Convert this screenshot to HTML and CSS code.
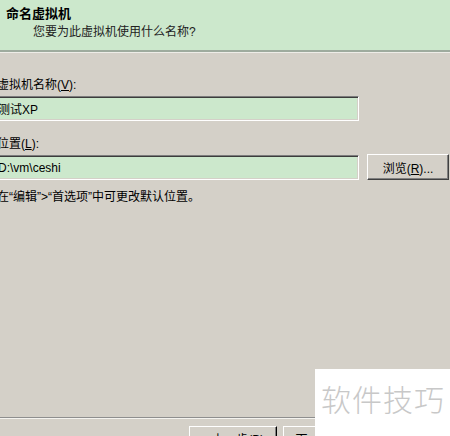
FILE: index.html
```html
<!DOCTYPE html>
<html lang="zh-CN">

<head>
    <meta charset="UTF-8" />
    <meta name="viewport" content="width=device-width, initial-scale=1" />
    <title>新建虚拟机向导</title>
    <link rel="stylesheet" href="styles.css">
</head>

<body>
    <div class="wizard">
        <div class="wizard-header">
            <div class="wizard-title">命名虚拟机</div>
            <div class="wizard-subtitle">您要为此虚拟机使用什么名称?</div>
        </div>

        <div class="wizard-body">
            <div class="field">
                <label for="vmName">虚拟机名称(<u>V</u>):</label>
                <div class="field-row">
                    <input type="text" id="vmName" class="text-input" value="测试XP" />
                </div>
            </div>

            <div class="field">
                <label for="vmPath">位置(<u>L</u>):</label>
                <div class="field-row">
                    <input type="text" id="vmPath" class="text-input" value="D:\vm\ceshi" />
                    <button type="button" class="btn btn-browse">浏览(<u>R</u>)...</button>
                </div>
            </div>

            <p class="hint">在“编辑”&gt;“首选项”中可更改默认位置。</p>
        </div>

        <div class="wizard-footer">
            <button type="button" class="btn btn-nav btn-back">&lt; 上一步(<u>B</u>)</button>
            <button type="button" class="btn btn-nav">下一步(<u>N</u>) &gt;</button>
        </div>
    </div>

    <!-- site watermark in the lower right corner -->
    <div class="watermark">软件技巧</div>
</body>

</html>
```

FILE: styles.css
```css
html,
body {
    height: 100%;
}

body {
    margin: 0;
    overflow: hidden;
    background-color: #d4d0c8;
    font-family: "Liberation Sans", "Noto Sans CJK SC", sans-serif;
    font-size: 12px;
    color: #000;
}

.wizard {
    display: flex;
    flex-direction: column;
    height: 100%;
}

.wizard-header {
    height: 52px;
    padding: 6px 0 0 6px;
    box-sizing: border-box;
    background-color: #cce8cc;
    border-bottom: 2px solid #9eab9e;
    box-shadow: 0 1px 0 #eeede8;
}

.wizard-title {
    font-size: 13px;
    font-weight: bold;
    line-height: 16px;
}

.wizard-subtitle {
    margin-top: 3px;
    padding-left: 27px;
    line-height: 14px;
    color: #222;
}

.wizard-body {
    flex: 1;
    padding-top: 26px;
    margin-left: -6px;
}

.field {
    margin-bottom: 16px;
}

.field label {
    display: block;
    margin: 0 0 4px 3px;
    line-height: 14px;
}

.field-row {
    display: flex;
    align-items: flex-start;
    gap: 8px;
}

.text-input {
    width: 365px;
    height: 25px;
    padding: 0 3px;
    box-sizing: border-box;
    font: inherit;
    color: #000;
    background-color: #cce8cc;
    border: 1px solid;
    border-color: #7c7c7c #ffffff #ffffff #7c7c7c;
    box-shadow: inset 1px 1px 0 #3c3c3c, inset -1px -1px 0 #d4d0c8;
    outline: none;
}

.btn {
    height: 26px;
    padding: 0;
    font: inherit;
    color: #000;
    background-color: #d4d0c8;
    border: 1px solid;
    border-color: #ffffff #404040 #404040 #ffffff;
    box-shadow: inset -1px -1px 0 #808080;
    cursor: pointer;
}

.btn-browse {
    width: 82px;
    margin-top: -1px;
}

.hint {
    margin: -6px 0 0 3px;
    line-height: 14px;
}

.wizard-footer {
    height: 10px;
    display: flex;
    gap: 6px;
    padding: 8px 0 0 189px;
    border-top: 1px solid #8e8e8e;
    box-shadow: inset 0 1px 0 #f4f3ef;
}

.btn-nav {
    width: 88px;
    height: 24px;
    flex-shrink: 0;
}

.btn-back {
    border-right-color: #000;
}

.watermark {
    position: absolute;
    left: 315px;
    top: 369px;
    width: 135px;
    height: 67px;
    padding: 9px 0 0 6px;
    box-sizing: border-box;
    background-color: #ffffff;
    font-family: "Noto Sans CJK SC", sans-serif;
    font-size: 30px;
    font-weight: 300;
    letter-spacing: 1px;
    line-height: 40px;
    color: #c8c8c8;
}
```
